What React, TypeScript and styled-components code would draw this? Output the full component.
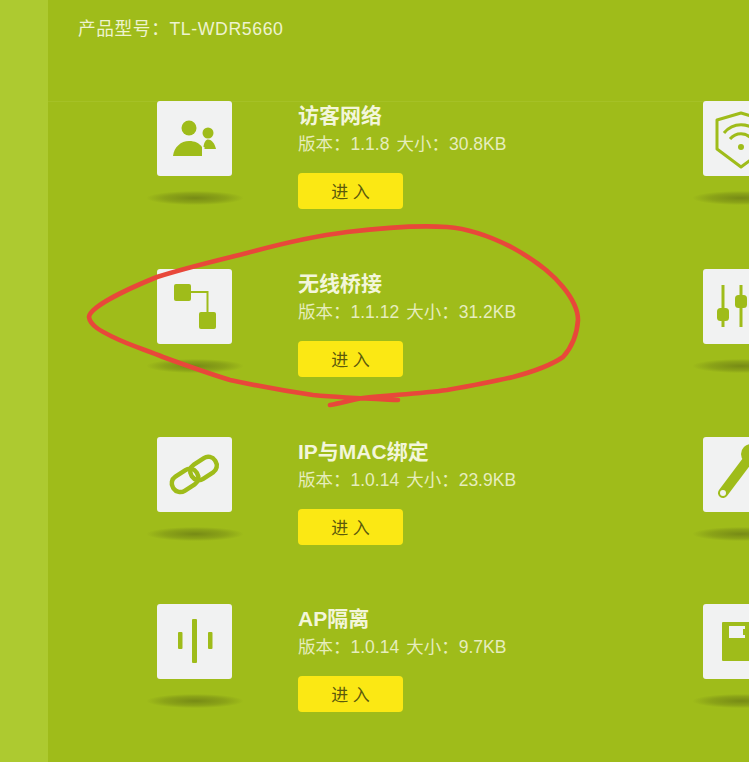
import { ReactNode } from "react";
import styled, { createGlobalStyle } from "styled-components";

const green = "#9fbc1a";

const GlobalStyle = createGlobalStyle`
  html, body {
    margin: 0;
    padding: 0;
    background: ${green};
  }
`;

const Page = styled.div`
  position: relative;
  display: flex;
  width: 749px;
  height: 762px;
  overflow: hidden;
  background-color: ${green};
  font-family: "Liberation Sans", "Noto Sans CJK SC", sans-serif;
`;

const Sidebar = styled.div`
  flex: 0 0 48px;
  background-color: #adca30;
`;

const Main = styled.div`
  flex: 1;
  min-width: 0;
`;

const Header = styled.div`
  display: flex;
  align-items: center;
  box-sizing: border-box;
  height: 102px;
  margin-bottom: -1px;
  padding: 0 0 47px 30px;
  border-bottom: 1px solid #a5c126;
  color: #eef3cf;
  font-size: 17.7px;
  letter-spacing: 0.6px;
`;

const ModuleGrid = styled.div`
  display: grid;
  grid-template-columns: 546px 546px;
  grid-template-rows: 168px 168px 167px 158px;
  padding-left: 109px;
`;

const Module = styled.div`
  display: flex;
  align-items: flex-start;
`;

const TileColumn = styled.div`
  display: flex;
  flex-direction: column;
  align-items: center;
  width: 75px;
`;

const Tile = styled.div`
  width: 75px;
  height: 75px;
  border-radius: 3px;
  background-color: #f1f2f2;
`;

const TileShadow = styled.div`
  width: 96px;
  height: 14px;
  margin-top: 15px;
  background: radial-gradient(
    ellipse at center,
    rgba(92, 106, 18, 0.6) 0%,
    rgba(92, 106, 18, 0.3) 45%,
    rgba(92, 106, 18, 0) 72%
  );
`;

const Info = styled.div`
  display: flex;
  flex-direction: column;
  align-items: flex-start;
  margin-left: 66px;
`;

const Title = styled.div`
  height: 30px;
  line-height: 30px;
  color: #f3f6da;
  font-size: 21px;
  font-weight: bold;
  white-space: nowrap;
`;

const Meta = styled.div`
  display: flex;
  gap: 7px;
  height: 24px;
  margin-top: 1px;
  line-height: 24px;
  color: #e6edbd;
  font-size: 17.5px;
  white-space: nowrap;
`;

const EnterButton = styled.button`
  width: 105px;
  height: 36px;
  margin-top: 17px;
  padding: 0 0 2px;
  border: none;
  border-radius: 4px;
  background-color: #fbe814;
  color: #5c5a0c;
  font-family: inherit;
  font-size: 17px;
`;

const ScribbleLayer = styled.svg`
  position: absolute;
  top: 0;
  left: 0;
  pointer-events: none;
`;

function TileIcon({ children }: { children: ReactNode }) {
  return (
    <svg width="75" height="75" viewBox="0 0 75 75" fill={green}>
      {children}
    </svg>
  );
}

const guestIcon = (
  <TileIcon>
    <circle cx="32" cy="27" r="7.5" />
    <circle cx="51" cy="32" r="5.5" />
    <path d="M16 55C17 46 24 40 32 40C38 40 42 42 45 46V55Z" />
    <path d="M46.5 46C47 41 49 38.5 51 38.5C55 38.5 58 43 59 48H47.5V46Z" />
  </TileIcon>
);

const bridgeIcon = (
  <TileIcon>
    <rect x="17" y="15" width="17" height="17" rx="2" />
    <rect x="42" y="43" width="17" height="17" rx="2" />
    <path d="M34 23H50.5V43" fill="none" stroke={green} strokeWidth="2" />
  </TileIcon>
);

const linkIcon = (
  <TileIcon>
    <g fill="none" stroke={green} strokeWidth="4.5" transform="rotate(-33 37 37)">
      <rect x="12" y="29" width="28" height="17" rx="8" />
      <rect x="34" y="29" width="28" height="17" rx="8" />
    </g>
  </TileIcon>
);

const isolationIcon = (
  <TileIcon>
    <rect x="35" y="15" width="5" height="44" rx="1" />
    <rect x="21" y="28" width="4.5" height="17" rx="1" />
    <rect x="51" y="28" width="4.5" height="17" rx="1" />
  </TileIcon>
);

const shieldIcon = (
  <TileIcon>
    <path
      d="M38 12L14 19V48L38 66L62 48V19Z"
      fill="none"
      stroke={green}
      strokeWidth="3"
      strokeLinejoin="round"
    />
    <path d="M21 32C30 21 46 21 55 32" fill="none" stroke={green} strokeWidth="3" />
    <path d="M27 38C33 31 43 31 49 38" fill="none" stroke={green} strokeWidth="3" />
    <circle cx="38" cy="46" r="3" />
  </TileIcon>
);

const slidersIcon = (
  <TileIcon>
    <rect x="18.5" y="16" width="3" height="42" />
    <rect x="36.5" y="16" width="3" height="42" />
    <rect x="14" y="39" width="12" height="13" rx="3.5" />
    <rect x="32" y="26" width="12" height="13" rx="3.5" />
  </TileIcon>
);

const wrenchIcon = (
  <TileIcon>
    <path d="M20 56L44 24" fill="none" stroke={green} strokeWidth="10" strokeLinecap="round" />
    <circle cx="48" cy="17" r="10" />
    <circle cx="20" cy="56" r="3" fill="#f1f2f2" />
  </TileIcon>
);

const backupIcon = (
  <TileIcon>
    <rect x="19" y="18" width="56" height="39" rx="1" />
    <rect x="26" y="22" width="16" height="12" fill="#f1f2f2" />
    <rect x="40" y="25" width="5" height="6" />
  </TileIcon>
);

type ModuleInfo = {
  icon: ReactNode;
  title?: string;
  version?: string;
  size?: string;
};

// two columns, the right one runs off the edge of the window
const modules: ModuleInfo[] = [
  { icon: guestIcon, title: "访客网络", version: "1.1.8", size: "30.8KB" },
  { icon: shieldIcon },
  { icon: bridgeIcon, title: "无线桥接", version: "1.1.12", size: "31.2KB" },
  { icon: slidersIcon },
  { icon: linkIcon, title: "IP与MAC绑定", version: "1.0.14", size: "23.9KB" },
  { icon: wrenchIcon },
  { icon: isolationIcon, title: "AP隔离", version: "1.0.14", size: "9.7KB" },
  { icon: backupIcon },
];

const scribble =
  "M398 400C375 399 345 398 313 395C285 391 258 386 230 380C207 373 185 365 163 357" +
  "C146 350 129 345 113 337C103 332 90 326 89 317C90 308 120 292 157 277" +
  "C185 268 215 261 247 253C280 244 315 236 347 232C380 228 415 225 447 227" +
  "C472 229 494 238 513 248C533 259 551 272 563 287C572 298 578 309 578 320" +
  "C577 335 572 347 563 357C550 366 532 372 513 377C492 382 470 386 447 390" +
  "C418 394 388 395 363 398C352 400 341 403 330 405";

export default function App() {
  return (
    <>
      <GlobalStyle />
      <Page>
        <Sidebar />
        <Main>
          <Header>产品型号：TL-WDR5660</Header>
          <ModuleGrid>
            {modules.map((item, index) => (
              <Module key={index}>
                <TileColumn>
                  <Tile>{item.icon}</Tile>
                  <TileShadow />
                </TileColumn>
                {item.title && (
                  <Info>
                    <Title>{item.title}</Title>
                    <Meta>
                      <span>版本：{item.version}</span>
                      <span>大小：{item.size}</span>
                    </Meta>
                    <EnterButton>进 入</EnterButton>
                  </Info>
                )}
              </Module>
            ))}
          </ModuleGrid>
        </Main>
        <ScribbleLayer width="749" height="762" viewBox="0 0 749 762">
          <path d={scribble} fill="none" stroke="#e8483a" strokeWidth="4.6" strokeLinecap="round" />
        </ScribbleLayer>
      </Page>
    </>
  );
}
